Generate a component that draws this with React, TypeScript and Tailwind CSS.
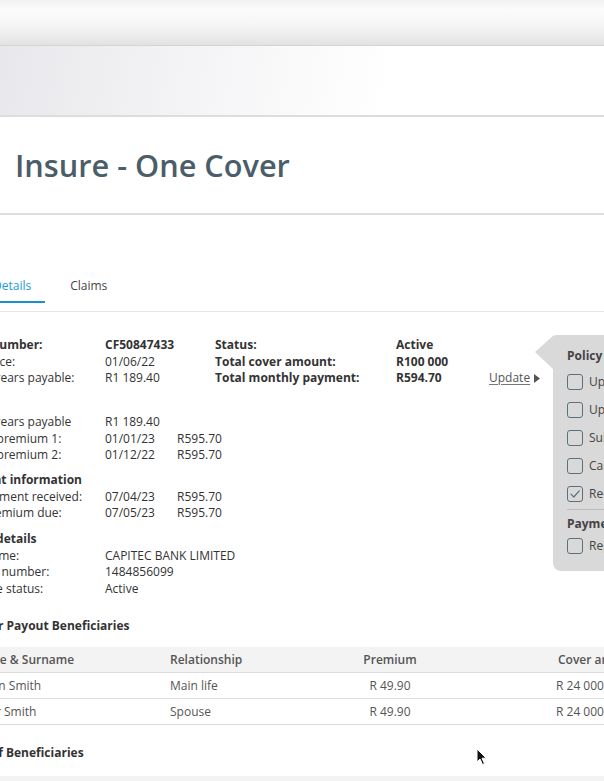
import React from "react";

function Checkbox({ checked }: { checked?: boolean }) {
  return (
    <div className="w-4 h-4 shrink-0 border-[1.5px] border-[#5d6f7a] rounded-[3px] flex items-center justify-center">
      {checked && (
        <svg width="12" height="12" viewBox="0 0 12 12" fill="none">
          <path d="M2 6.2 L4.8 9 L10.2 2.8" stroke="#5d6f7a" strokeWidth="1.2" strokeLinecap="round" strokeLinejoin="round" />
        </svg>
      )}
    </div>
  );
}

function MenuItem({ label, checked }: { label: string; checked?: boolean }) {
  return (
    <div className="h-[28px] flex items-center gap-[6px] whitespace-nowrap">
      <Checkbox checked={checked} />
      <span>{label}</span>
    </div>
  );
}

export default function App() {
  return (
    <div className="relative w-[604px] h-[781px] overflow-hidden bg-white text-[12px] text-[#333] font-['Open_Sans',sans-serif]">
      {/* top bands */}
      <div className="h-[46px] border-b border-[#d4d4d4] bg-[linear-gradient(to_bottom,#f1f1f1_0%,#fcfcfc_22%,#f4f4f4_60%,#e2e2e2_100%)]" />
      <div className="h-[71px] border-b-2 border-[#dddddd] bg-[linear-gradient(100deg,#e8e8ec_0%,#f5f5f7_35%,#ffffff_65%)]" />

      {/* title */}
      <div className="h-[98px] border-b-2 border-[#dedede] flex items-center pl-[15px]">
        <h1 className="text-[30.7px] font-semibold text-[#4b5d69] leading-none">Insure - One Cover</h1>
      </div>

      {/* tabs */}
      <div className="border-b border-[#e6e6e6] pt-[63px] pb-[8px]">
        <div className="-ml-[17px] flex gap-[15px] leading-4">
          <div className="pl-[10px] pr-[14px] pb-[7px] border-b-2 border-[#1a8fd0] text-[#1b9bd7]">Details</div>
          <div className="px-[10px] pb-[7px] border-b-2 border-transparent text-[#444]">Claims</div>
        </div>
      </div>

      {/* info */}
      <div className="-ml-[47px] pt-[25px] leading-[16.5px] whitespace-nowrap">
        <div className="grid grid-cols-[152px_110px_181px_93px_auto]">
          <div className="font-bold">Policy number:</div>
          <div className="font-bold">CF50847433</div>
          <div className="font-bold">Status:</div>
          <div className="font-bold">Active</div>
          <div />
          <div>Valid since:</div>
          <div>01/06/22</div>
          <div className="font-bold">Total cover amount:</div>
          <div className="font-bold">R100 000</div>
          <div />
          <div>Total arrears payable:</div>
          <div>R1 189.40</div>
          <div className="font-bold">Total monthly payment:</div>
          <div className="font-bold">R594.70</div>
          <div className="flex items-center gap-[4px] text-[#555]">
            <span className="underline underline-offset-2 decoration-[#777]">Update</span>
            <svg width="6" height="9" viewBox="0 0 6 9">
              <polygon points="0,0 6,4.5 0,9" fill="#555" />
            </svg>
          </div>
        </div>

        <div className="mt-[27.5px] grid grid-cols-[152px_72px_auto]">
          <div>Total arrears payable</div>
          <div>R1 189.40</div>
          <div />
          <div>Unpaid premium 1:</div>
          <div>01/01/23</div>
          <div>R595.70</div>
          <div>Unpaid premium 2:</div>
          <div>01/12/22</div>
          <div>R595.70</div>
        </div>

        <div className="mt-[8.5px] font-bold">Payment information</div>
        <div className="grid grid-cols-[152px_72px_auto]">
          <div>Last payment received:</div>
          <div>07/04/23</div>
          <div>R595.70</div>
          <div>Next premium due:</div>
          <div>07/05/23</div>
          <div>R595.70</div>
        </div>

        <div className="mt-[9.5px] -ml-[9px] font-bold">Banking details</div>
        <div className="grid grid-cols-[152px_auto]">
          <div>Bank name:</div>
          <div>CAPITEC BANK LIMITED</div>
          <div>Account number:</div>
          <div>1484856099</div>
          <div>Mandate status:</div>
          <div>Active</div>
        </div>
      </div>

      {/* beneficiaries */}
      <div className="mt-[21px] leading-[16.5px] whitespace-nowrap">
        <div className="-ml-[31px] font-bold">Cover Payout Beneficiaries</div>
        <div className="mt-[12.75px] -ml-[36px] w-[800px]">
          <div className="grid grid-cols-[198px_148px_160px_294px] h-[26px] items-center bg-[#f3f3f3] border-b border-[#dcdcdc] font-semibold text-[#555]">
            <div className="pl-[8px]">Name &amp; Surname</div>
            <div className="pl-[8px]">Relationship</div>
            <div className="text-center">Premium</div>
            <div className="pl-[88px]">Cover amount</div>
          </div>
          <div className="grid grid-cols-[198px_148px_160px_294px] h-[26px] items-center border-b border-[#dcdcdc] text-[#555]">
            <div className="pl-[8px]">Susan Smith</div>
            <div className="pl-[8px]">Main life</div>
            <div className="text-center">R 49.90</div>
            <div className="pl-[86px]">R 24 000.00</div>
          </div>
          <div className="grid grid-cols-[198px_148px_160px_294px] h-[26px] items-center border-b border-[#dcdcdc] text-[#555]">
            <div className="pl-[7px]">Peter Smith</div>
            <div className="pl-[8px]">Spouse</div>
            <div className="text-center">R 49.90</div>
            <div className="pl-[86px]">R 24 000.00</div>
          </div>
        </div>

        <div className="mt-[20px] -ml-[34px] font-bold">List of Beneficiaries</div>
        <div className="mt-[14px] -ml-[36px] w-[800px] h-[26px] bg-[#f3f3f3]" />
      </div>

      {/* popover menu */}
      <div className="absolute left-[535px] top-[335px]">
        <svg className="absolute left-0 top-0" width="19" height="35" viewBox="0 0 19 35">
          <polygon points="19,0 0,17 19,35" fill="#d9d9d9" />
        </svg>
        <div className="ml-[18px] w-[140px] h-[236px] bg-[#d9d9d9] rounded-tl-[4px] rounded-bl-[8px] pl-[14px] pt-[13px] text-[#444] leading-4 whitespace-nowrap">
          <div className="font-bold">Policy</div>
          <div className="mt-[4px]">
            <MenuItem label="Update beneficiaries" />
            <MenuItem label="Update cover" />
            <MenuItem label="Submit claim" />
            <MenuItem label="Cancel policy" />
            <MenuItem label="Re-instate policy" checked />
          </div>
          <div className="mt-[1px] border-t border-[#bcbcbc]" />
          <div className="mt-[6px] font-bold">Payment</div>
          <MenuItem label="Replace debit order" />
        </div>
      </div>

      {/* mouse cursor */}
      <svg className="absolute left-[476px] top-[748px]" width="12" height="18" viewBox="0 0 12 18">
        <path d="M1 1 L1 14 L4 11 L6.5 16.5 L8.5 15.6 L6 10.2 L10.2 10.2 Z" fill="#111" stroke="#fff" strokeWidth="1" strokeLinejoin="round" />
      </svg>
    </div>
  );
}
